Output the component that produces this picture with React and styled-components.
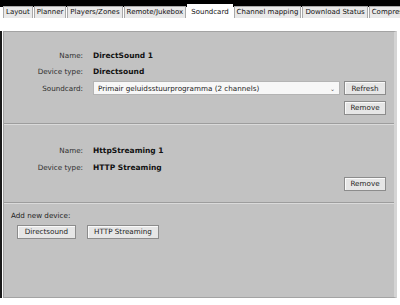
import React from "react";
import styled, { createGlobalStyle } from "styled-components";

const GlobalStyle = createGlobalStyle`
  html, body {
    margin: 0;
    padding: 0;
    background: #ffffff;
  }
  body {
    font-family: "DejaVu Sans", Verdana, sans-serif;
    font-size: 7.2px;
    color: #222;
    width: 400px;
    height: 305px;
    overflow: hidden;
  }
`;

const TabBar = styled.div`
  display: flex;
  align-items: flex-start;
  height: 19px;
  padding-left: 3px;
  background: linear-gradient(#000 0, #000 7px, #fff 7px);
  overflow: hidden;
  white-space: nowrap;
`;

const Tab = styled.div`
  flex: none;
  margin-top: ${(p) => (p.$active ? "4px" : "6px")};
  margin-right: 1px;
  height: ${(p) => (p.$active ? "16px" : "11px")};
  padding: ${(p) => (p.$active ? "2px 3px 0" : "0 2px")};
  line-height: 11px;
  font-size: 7px;
  color: #111;
  background: ${(p) => (p.$active ? "#ffffff" : "#e9e9e9")};
  border: 1px solid ${(p) => (p.$active ? "#ffffff" : "#a9a9a9")};
  border-bottom: none;
`;

const Body = styled.div`
  display: flex;
  margin-top: 12px;
  height: 267px;
  margin-right: 3px;
`;

const Stripe = styled.div`
  width: 2px;
  margin-right: 1px;
  background: #1a1a1a;
`;

const Panel = styled.div`
  flex: 1;
  display: flex;
  flex-direction: column;
  background: #c2c2c2;
  border: 1px solid #a3a3a3;
  border-right: 3px solid #d4d4d4;
`;

const Card = styled.div`
  display: flex;
  flex-direction: column;
  padding: ${(p) => p.$pad};
  border-bottom: 1px solid #9d9d9d;
  box-shadow: 0 1px 0 #dadada;
  margin-bottom: 2px;
`;

const Row = styled.div`
  display: grid;
  grid-template-columns: 79px 1fr auto;
  column-gap: 10px;
  align-items: center;
  height: 16.5px;
`;

const Label = styled.div`
  text-align: right;
  color: #2e2e2e;
`;

const Value = styled.div`
  font-weight: bold;
  color: #111;
  font-size: 7.5px;
`;

const SelectBox = styled.div`
  display: flex;
  align-items: center;
  justify-content: space-between;
  height: 12px;
  margin-right: -6px;
  padding: 0 4px;
  background: #f7f7f7;
  border: 1px solid #b4b4b4;
  color: #222;
`;

const Chevron = styled.span`
  font-size: 6px;
  color: #555;
`;

const Button = styled.div`
  display: flex;
  align-items: center;
  justify-content: center;
  width: ${(p) => p.$w};
  height: 12px;
  background: #e6e6e6;
  border: 1px solid #8c8c8c;
  color: #222;
  box-shadow: inset 1px 1px 0 #fafafa;
`;

const RightAction = styled.div`
  display: flex;
  justify-content: flex-end;
  margin-top: ${(p) => p.$top};
`;

const AddSection = styled.div`
  display: flex;
  flex-direction: column;
  padding: 6px 0 0 7px;
  gap: 5px;
`;

const AddTitle = styled.div`
  color: #222;
`;

const AddButtons = styled.div`
  display: flex;
  gap: 11px;
  padding-left: 6px;
`;

export default function App() {
  const tabs = [
    "Layout",
    "Planner",
    "Players/Zones",
    "Remote/Jukebox",
    "Soundcard",
    "Channel mapping",
    "Download Status",
    "Compression",
  ];

  return (
    <>
      <GlobalStyle />
      <TabBar>
        {tabs.map((t) => (
          <Tab key={t} $active={t === "Soundcard"}>
            {t}
          </Tab>
        ))}
      </TabBar>
      <Body>
        <Stripe />
        <Panel>
          <Card $pad="15px 8px 8px 0">
            <Row>
              <Label>Name:</Label>
              <Value>DirectSound 1</Value>
            </Row>
            <Row>
              <Label>Device type:</Label>
              <Value>Directsound</Value>
            </Row>
            <Row>
              <Label>Soundcard:</Label>
              <SelectBox>
                Primair geluidsstuurprogramma (2 channels)
                <Chevron>⌄</Chevron>
              </SelectBox>
              <Button $w="40px">Refresh</Button>
            </Row>
            <RightAction $top="4px">
              <Button $w="40px">Remove</Button>
            </RightAction>
          </Card>
          <Card $pad="17px 8px 11px 0">
            <Row>
              <Label>Name:</Label>
              <Value>HttpStreaming 1</Value>
            </Row>
            <Row>
              <Label>Device type:</Label>
              <Value>HTTP Streaming</Value>
            </Row>
            <RightAction $top="1px">
              <Button $w="40px">Remove</Button>
            </RightAction>
          </Card>
          <AddSection>
            <AddTitle>Add new device:</AddTitle>
            <AddButtons>
              <Button $w="57px">Directsound</Button>
              <Button $w="70px">HTTP Streaming</Button>
            </AddButtons>
          </AddSection>
        </Panel>
      </Body>
    </>
  );
}
